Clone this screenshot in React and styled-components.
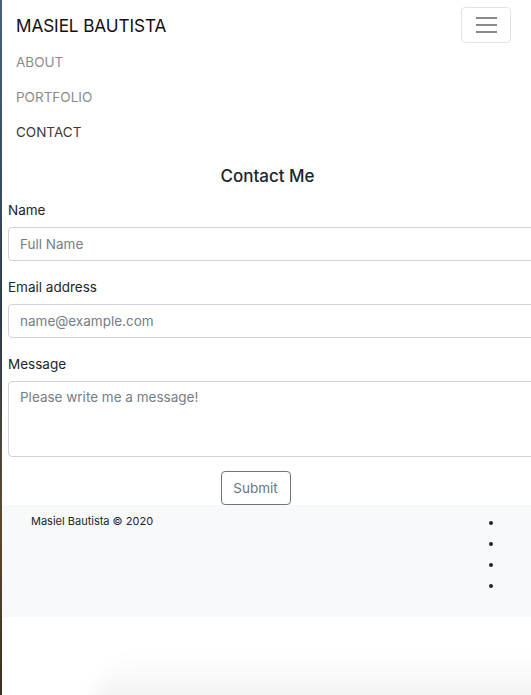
import React from 'react';
import styled, { createGlobalStyle } from 'styled-components';

const GlobalStyle = createGlobalStyle`
    html, body {
        margin: 0;
        padding: 0;
        background: #fff;
        overflow: hidden;
    }
    body {
        font-family: Inter, "Noto Sans", "Liberation Sans", sans-serif;
        color: #212529;
    }
    * {
        box-sizing: border-box;
    }
`;

const Page = styled.div`
    position: relative;
    height: 695px;
    width: 531px;
    overflow: hidden;
    border-left: 2px solid transparent;
    border-image: linear-gradient(#47627e, #2e3c4d 45%, #5b4a2f 75%, #3d2f20) 1;
`;

const Navbar = styled.nav`
    padding: 7px 20px 0 14px;
`;

const NavHeader = styled.div`
    display: flex;
    align-items: center;
    justify-content: space-between;
    height: 36px;
`;

const Brand = styled.a`
    font-size: 17.2px;
    color: #111;
    text-decoration: none;
    letter-spacing: -0.1px;
    margin-top: 1px;
`;

const Toggler = styled.button`
    width: 50px;
    height: 36px;
    border: 1px solid #e3e3e3;
    border-radius: 4px;
    background: #fff;
    display: flex;
    flex-direction: column;
    align-items: center;
    justify-content: center;
    gap: 5px;
    padding: 0;
`;

const TogglerBar = styled.span`
    display: block;
    width: 21px;
    height: 2px;
    background: #8a8a8a;
`;

const NavList = styled.ul`
    list-style: none;
    margin: 2px 0 0;
    padding: 0;
`;

const NavLink = styled.a`
    display: block;
    line-height: 35px;
    font-size: 13.5px;
    color: ${props => (props.active ? '#3a3a3a' : '#8c8c8c')};
    text-decoration: none;
`;

const Main = styled.main`
    padding: 0 0 0 6px;
`;

const Title = styled.h2`
    margin: 13px 0 0;
    font-size: 17px;
    font-weight: 500;
    line-height: 26px;
    text-align: center;
    color: #212529;
    padding-right: 4px;
`;

const Form = styled.form`
    width: 540px;
    margin-top: 11px;
    display: flex;
    flex-direction: column;
`;

const Group = styled.div`
    display: flex;
    flex-direction: column;
    margin-bottom: 16px;
`;

const Label = styled.label`
    font-size: 13.5px;
    line-height: 20px;
    margin-bottom: 7px;
    color: #212529;
`;

const Input = styled.input`
    height: 34px;
    border: 1px solid #ced4da;
    border-radius: 4px;
    padding: 0 11px;
    font-family: inherit;
    font-size: 13.5px;
    color: #495057;
    &::placeholder {
        color: #757d85;
    }
`;

const TextArea = styled.textarea`
    height: 76px;
    border: 1px solid #ced4da;
    border-radius: 4px;
    padding: 7px 11px;
    font-family: inherit;
    font-size: 13.5px;
    resize: vertical;
    &::placeholder {
        color: #757d85;
    }
`;

const Actions = styled.div`
    width: 495px;
    display: flex;
    justify-content: center;
    margin-top: -2px;
`;

const SubmitButton = styled.button`
    width: 70px;
    height: 34px;
    border: 1px solid #6c757d;
    border-radius: 4px;
    background: #fff;
    color: #6c757d;
    font-family: inherit;
    font-size: 13.5px;
    padding: 0;
`;

const Footer = styled.footer`
    height: 112px;
    background: #f8f9fa;
    display: flex;
    justify-content: space-between;
    padding: 9px 0 0 29px;
`;

const Copy = styled.span`
    font-size: 11px;
    line-height: 14px;
    color: #212529;
`;

const SocialList = styled.ul`
    margin: 0;
    padding: 0;
    width: 27px;
    list-style: disc;
    color: #212529;
    font-size: 13px;
`;

const SocialItem = styled.li`
    height: 21px;
`;

const Shade = styled.div`
    position: absolute;
    left: 90px;
    right: -40px;
    bottom: -20px;
    height: 60px;
    border-radius: 60px 0 0 0;
    background: linear-gradient(rgba(0, 0, 0, 0), rgba(0, 0, 0, 0.07));
    filter: blur(10px);
    pointer-events: none;
`;

export default function App() {
    return (
        <>
            <GlobalStyle />
            <Page>
                <Navbar>
                    <NavHeader>
                        <Brand href="#">MASIEL BAUTISTA</Brand>
                        <Toggler aria-label="Toggle navigation">
                            <TogglerBar />
                            <TogglerBar />
                            <TogglerBar />
                        </Toggler>
                    </NavHeader>
                    <NavList>
                        <li><NavLink href="#">ABOUT</NavLink></li>
                        <li><NavLink href="#">PORTFOLIO</NavLink></li>
                        <li><NavLink href="#" active>CONTACT</NavLink></li>
                    </NavList>
                </Navbar>

                <Main>
                    <Title>Contact Me</Title>
                    <Form onSubmit={e => e.preventDefault()}>
                        <Group>
                            <Label htmlFor="name">Name</Label>
                            <Input id="name" type="text" placeholder="Full Name" />
                        </Group>
                        <Group>
                            <Label htmlFor="email">Email address</Label>
                            <Input id="email" type="email" placeholder="name@example.com" />
                        </Group>
                        <Group>
                            <Label htmlFor="message">Message</Label>
                            <TextArea id="message" placeholder="Please write me a message!" />
                        </Group>
                        <Actions>
                            <SubmitButton type="submit">Submit</SubmitButton>
                        </Actions>
                    </Form>
                </Main>

                <Footer>
                    <Copy>Masiel Bautista © 2020</Copy>
                    <SocialList>
                        <SocialItem />
                        <SocialItem />
                        <SocialItem />
                        <SocialItem />
                    </SocialList>
                </Footer>
                <Shade />
            </Page>
        </>
    );
}
